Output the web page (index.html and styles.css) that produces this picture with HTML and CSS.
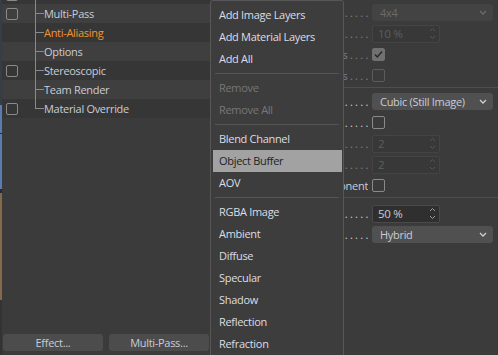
FILE: index.html
```html
<!DOCTYPE html>
<html lang="en">
<head>
    <meta charset="UTF-8">
    <title>Render Settings - Anti-Aliasing</title>
    <link rel="stylesheet" href="styles.css">
</head>
<body>
    <div class="app">
        <div class="edge"></div>

        <div class="tree-panel">
            <ul class="tree">
                <li class="tree-row dark"><span class="check-cell"><span class="box"></span></span><span class="branch"></span><span class="tree-label"></span></li>
                <li class="tree-row light"><span class="check-cell"><span class="box"></span></span><span class="branch"></span><span class="tree-label">Multi-Pass</span></li>
                <li class="tree-row dark"><span class="check-cell"></span><span class="branch"></span><span class="tree-label selected">Anti-Aliasing</span></li>
                <li class="tree-row light"><span class="check-cell"></span><span class="branch"></span><span class="tree-label">Options</span></li>
                <li class="tree-row dark"><span class="check-cell"><span class="box"></span></span><span class="branch"></span><span class="tree-label">Stereoscopic</span></li>
                <li class="tree-row light"><span class="check-cell"></span><span class="branch"></span><span class="tree-label">Team Render</span></li>
                <li class="tree-row dark"><span class="check-cell"><span class="box"></span></span><span class="branch last"></span><span class="tree-label">Material Override</span></li>
            </ul>
            <div class="tree-buttons">
                <button class="btn">Effect...</button>
                <button class="btn">Multi-Pass...</button>
            </div>
        </div>

        <div class="attr-panel">
            <div class="attr-row">
                <span class="attr-label dim">Max Level . . . . . . . . . . . . .</span>
                <span class="dropdown disabled"><span>4x4</span><svg class="chev" viewBox="0 0 8 5"><path d="M1 1l3 3 3-3"/></svg></span>
            </div>
            <div class="attr-row">
                <span class="attr-label dim">Threshold . . . . . . . . . . . . .</span>
                <span class="spinner disabled"><span>10 %</span><svg class="arrows" viewBox="0 0 7 13"><path d="M1 4l2.5-2.5L6 4M1 9l2.5 2.5L6 9"/></svg></span>
            </div>
            <div class="attr-row">
                <span class="attr-label dim">Use Object Properties . . . .</span>
                <span class="box checked disabled"><svg viewBox="0 0 11 11"><path d="M2 5.5l2.3 2.5L9 2.5"/></svg></span>
            </div>
            <div class="attr-row">
                <span class="attr-label dim">Consider Multi-Passes . . . .</span>
                <span class="box disabled"></span>
            </div>

            <div class="attr-sep"></div>

            <div class="attr-row">
                <span class="attr-label">Filter . . . . . . . . . . . . . . .</span>
                <span class="dropdown"><span>Cubic (Still Image)</span><svg class="chev" viewBox="0 0 8 5"><path d="M1 1l3 3 3-3"/></svg></span>
            </div>
            <div class="attr-row">
                <span class="attr-label">Custom Size . . . . . . . . . . . .</span>
                <span class="box"></span>
            </div>
            <div class="attr-row">
                <span class="attr-label dim">Filter Width . . . . . . . . . . . .</span>
                <span class="spinner disabled"><span>2</span><svg class="arrows" viewBox="0 0 7 13"><path d="M1 4l2.5-2.5L6 4M1 9l2.5 2.5L6 9"/></svg></span>
            </div>
            <div class="attr-row">
                <span class="attr-label dim">Filter Height . . . . . . . . . . . .</span>
                <span class="spinner disabled"><span>2</span><svg class="arrows" viewBox="0 0 7 13"><path d="M1 4l2.5-2.5L6 4M1 9l2.5 2.5L6 9"/></svg></span>
            </div>
            <div class="attr-row">
                <span class="attr-label">Clip Negative Component</span>
                <span class="box"></span>
            </div>

            <div class="attr-sep last"></div>

            <div class="attr-row">
                <span class="attr-label">MIP Scale . . . . . . . . . . . . .</span>
                <span class="spinner"><span>50 %</span><svg class="arrows" viewBox="0 0 7 13"><path d="M1 4l2.5-2.5L6 4M1 9l2.5 2.5L6 9"/></svg></span>
            </div>
            <div class="attr-row">
                <span class="attr-label">Mode . . . . . . . . . . . . . . . .</span>
                <span class="dropdown"><span>Hybrid</span><svg class="chev" viewBox="0 0 8 5"><path d="M1 1l3 3 3-3"/></svg></span>
            </div>
        </div>

        <div class="menu">
            <div class="menu-item">Add Image Layers</div>
            <div class="menu-item">Add Material Layers</div>
            <div class="menu-item">Add All</div>
            <div class="menu-sep"></div>
            <div class="menu-item disabled">Remove</div>
            <div class="menu-item disabled">Remove All</div>
            <div class="menu-sep"></div>
            <div class="menu-item">Blend Channel</div>
            <div class="menu-item active">Object Buffer</div>
            <div class="menu-item">AOV</div>
            <div class="menu-sep"></div>
            <div class="menu-item">RGBA Image</div>
            <div class="menu-item">Ambient</div>
            <div class="menu-item">Diffuse</div>
            <div class="menu-item">Specular</div>
            <div class="menu-item">Shadow</div>
            <div class="menu-item">Reflection</div>
            <div class="menu-item">Refraction</div>
        </div>
    </div>
</body>
</html>
```
FILE: styles.css
```css
* {
    box-sizing: border-box;
}
body {
    margin: 0;
    width: 498px;
    height: 355px;
    overflow: hidden;
    background-color: #3b3b3b;
    color: #c9ccd8;
    font-family: 'Open Sans', 'Noto Sans', sans-serif;
    font-size: 11px;
    letter-spacing: -0.3px;
}
.app {
    position: relative;
    display: flex;
    height: 355px;
}
.edge {
    width: 2px;
    flex-shrink: 0;
    background: linear-gradient(#363c48 0, #363c48 105px, #5a7cb0 105px, #5a7cb0 133px, #2a2a2a 133px, #2a2a2a 134px, #5a7cb0 134px, #5a7cb0 189px, #2a2a2a 189px, #2a2a2a 193px, #86684a 193px, #86684a 300px, #333 300px);
}

/* tree */
.tree-panel {
    width: 208px;
    flex-shrink: 0;
    display: flex;
    flex-direction: column;
}
.tree {
    list-style: none;
    margin: -15px 0 0;
    padding: 0;
}
.tree-row {
    display: flex;
    align-items: center;
    height: 19px;
}
.tree-row.light {
    background-color: #3f3f3f;
}
.tree-row.dark {
    background-color: #363636;
}
.check-cell {
    width: 33px;
    display: flex;
    align-items: center;
    padding-left: 4px;
}
.branch {
    width: 9px;
    align-self: stretch;
    background:
        linear-gradient(#8a8a8a, #8a8a8a) left top / 1px 100% no-repeat,
        linear-gradient(#8a8a8a, #8a8a8a) left 9px / 100% 1px no-repeat;
}
.branch.last {
    background:
        linear-gradient(#8a8a8a, #8a8a8a) left top / 1px 10px no-repeat,
        linear-gradient(#8a8a8a, #8a8a8a) left 9px / 100% 1px no-repeat;
}
.tree-label {
    white-space: nowrap;
}
.tree-label.selected {
    color: #f5922f;
}
.tree-buttons {
    margin-top: auto;
    display: flex;
    gap: 6px;
    padding: 0 0 4px 1px;
}
.btn {
    width: 100px;
    height: 17px;
    padding: 0;
    border: none;
    border-radius: 3px;
    background-color: #4c4c4c;
    color: #c9ccd8;
    font: inherit;
    letter-spacing: inherit;
}

/* checkboxes */
.box {
    width: 13px;
    height: 13px;
    border: 1px solid #8a8a8a;
    border-radius: 2px;
    display: flex;
    align-items: center;
    justify-content: center;
}
.check-cell .box {
    width: 12px;
    height: 12px;
}
.box.disabled {
    border-color: #5c5c5c;
}
.box.checked {
    background-color: #707070;
    border-color: #707070;
}
.box svg {
    width: 11px;
    height: 11px;
    fill: none;
    stroke: #262626;
    stroke-width: 1.4;
}

/* attributes */
.attr-panel {
    flex: 1;
    padding-top: 2px;
}
.attr-row {
    display: flex;
    align-items: center;
    height: 21px;
}
.attr-label {
    width: 158px;
    margin-right: 4px;
    display: flex;
    justify-content: flex-end;
    overflow: hidden;
    white-space: nowrap;
}
.attr-label.dim {
    color: #7d8090;
}
.attr-sep {
    height: 1px;
    background-color: #4e4e4e;
    margin: 1px 0 3px;
}
.attr-sep.last {
    margin-bottom: 5px;
}
.dropdown {
    width: 121px;
    height: 17px;
    padding: 0 6px 0 8px;
    display: flex;
    align-items: center;
    justify-content: space-between;
    background-color: #505050;
    border-radius: 3px;
    color: #c9ccd8;
}
.dropdown.disabled {
    background-color: #434343;
    color: #6c6c6c;
}
.chev {
    width: 8px;
    height: 5px;
    fill: none;
    stroke: #d0d0d0;
    stroke-width: 1.3;
}
.dropdown.disabled .chev {
    stroke: #6c6c6c;
}
.spinner {
    width: 68px;
    height: 18px;
    padding: 0 3px 0 5px;
    display: flex;
    align-items: center;
    justify-content: space-between;
    background-color: #2f2f2f;
    border: 1px solid #4a4a4a;
    border-radius: 2px;
    color: #c9ccd8;
    font-size: 11.5px;
}
.spinner.disabled {
    background-color: #383838;
    border-color: #444;
    color: #5e5e5e;
}
.arrows {
    width: 7px;
    height: 13px;
    fill: none;
    stroke: #9a9a9a;
    stroke-width: 1;
}
.spinner.disabled .arrows {
    stroke: #555;
}

/* popup menu */
.menu {
    position: absolute;
    left: 210px;
    top: 0;
    bottom: -6px;
    width: 134px;
    padding: 3px 0;
    background-color: #3d3d3d;
    border: 1px solid #575757;
    border-radius: 3px;
}
.menu-item {
    height: 22px;
    line-height: 22px;
    margin: 0 1px 0 2px;
    padding-left: 6px;
    color: #dcdde4;
    white-space: nowrap;
}
.menu-item.disabled {
    color: #777;
}
.menu-item.active {
    background-color: #a2a2a2;
    color: #222;
}
.menu-sep {
    height: 1px;
    margin: 3px 4px;
    background-color: #555;
}
```
